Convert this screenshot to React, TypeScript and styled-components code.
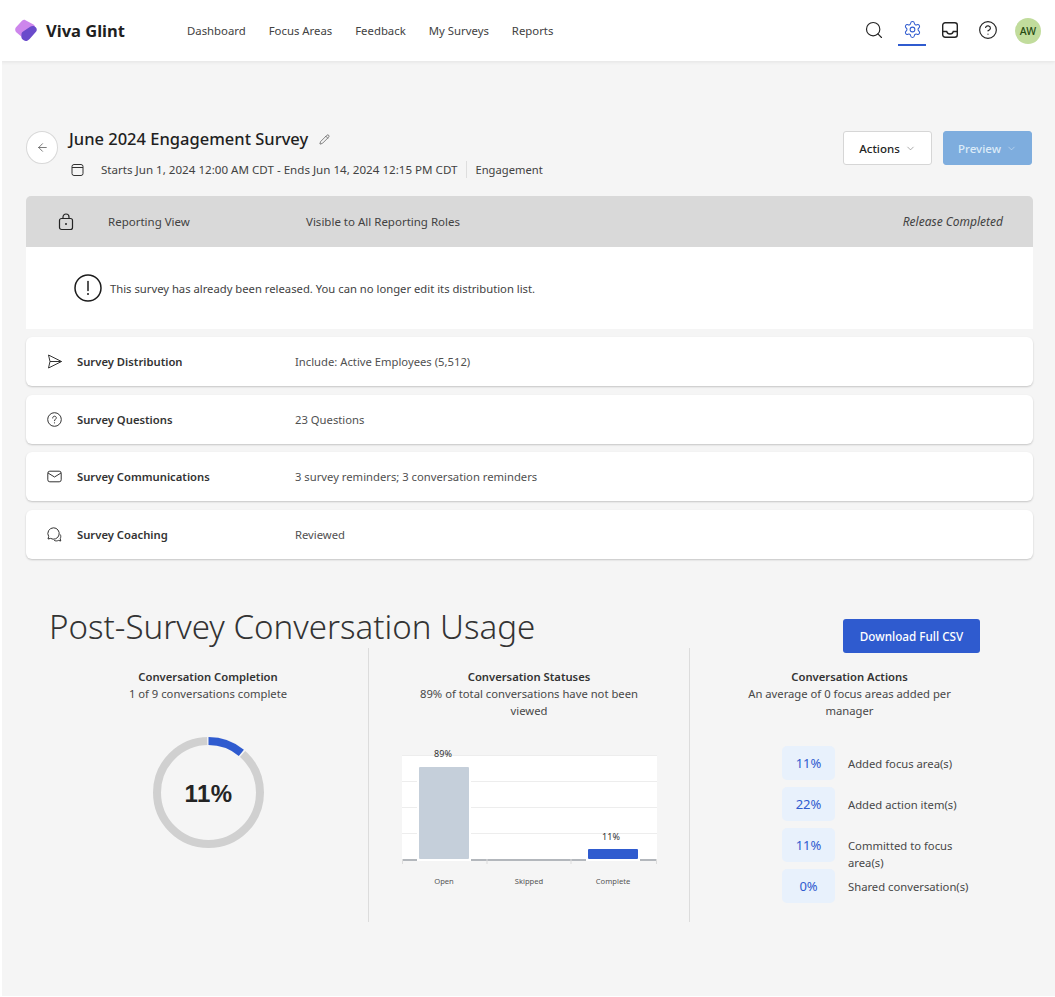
import styled, { createGlobalStyle } from "styled-components";
import { ArrowLeft, ChevronDown, CircleHelp, Pencil, Search, Settings } from "lucide-react";

const GlobalStyle = createGlobalStyle`
  html, body {
    margin: 0;
    padding: 0;
    background: #ffffff;
  }
  body {
    font-family: "Noto Sans", "Open Sans", sans-serif;
    color: #242424;
  }
  * {
    box-sizing: border-box;
  }
`;

const Logo = () => (
  <svg width="23" height="23" viewBox="0 0 23 23">
    <path d="M.8 8.500 7 1.800c1-1 2.400-1.200 3.500-.6l8 4.300c1.500.8 1.800 2.600.6 3.900l-8.600 8.400c-1 1-2.500 1-3.600.3L1.500 13.500C0 12.500-.2 9.800.8 8.500z" fill="#cd86ec" />
    <path d="M6.500 14.800c.2-1.300 1-2 2-2.600l6.300-4.300c1.500-1 3.300-1.300 4.900-.5 2 1 2.800 3.300 1.500 5l-6.600 7.500c-1.500 1.600-3.500 2.600-5.400 1.700-1.700-.8-2.900-2-2.800-3.800z" fill="#6a4bcb" />
  </svg>
);

const InboxIcon = () => (
  <svg width="18" height="18" viewBox="0 0 18 18" fill="none" stroke="#242424" strokeWidth="1.400">
    <rect x="1.700" y="1.700" width="14.600" height="14.600" rx="2.500" />
    <path d="M1.700 10.500h4c.5 2 1.500 2.500 3.300 2.500s2.800-.5 3.300-2.500h4" />
  </svg>
);

const CalendarIcon = () => (
  <svg width="13" height="14" viewBox="0 0 13 14" fill="none" stroke="#333" strokeWidth="1">
    <rect x="1" y="1.500" width="11" height="11" rx="2" />
    <path d="M1 4.500h11" />
  </svg>
);

const LockIcon = () => (
  <svg width="16" height="18" viewBox="0 0 16 18" fill="none" stroke="#242424" strokeWidth="1.200">
    <rect x="1.500" y="5.500" width="13" height="11" rx="2" />
    <path d="M5 5.500V4a3 3 0 0 1 6 0v1.500" />
    <circle cx="8" cy="11" r="1" fill="#242424" stroke="none" />
  </svg>
);

const AlertIcon = () => (
  <svg width="28" height="28" viewBox="0 0 28 28" fill="none" stroke="#1c1c1c" strokeWidth="1.500">
    <circle cx="14" cy="14" r="13" />
    <path d="M14 7.500v9" strokeLinecap="round" />
    <circle cx="14" cy="20" r="1" fill="#1c1c1c" stroke="none" />
  </svg>
);

const SendIcon = () => (
  <svg width="15" height="15" viewBox="0 0 15 15" fill="none" stroke="#333" strokeWidth="1">
    <path d="M1.500 1 14.500 7.500 1.500 14 3 7.500z" strokeLinejoin="round" />
    <path d="M3 7.500h11.500" />
  </svg>
);

const QuestionIcon = () => (
  <svg width="15" height="15" viewBox="0 0 15 15" fill="none" stroke="#333" strokeWidth="1">
    <circle cx="7.500" cy="7.500" r="6.800" />
    <path d="M5.700 6c0-1.100.8-1.800 1.800-1.800s1.800.7 1.800 1.600c0 1.400-1.800 1.400-1.800 2.900" strokeLinecap="round" />
    <circle cx="7.500" cy="10.800" r=".6" fill="#333" stroke="none" />
  </svg>
);

const MailIcon = () => (
  <svg width="15" height="15" viewBox="0 0 15 15" fill="none" stroke="#333" strokeWidth="1">
    <rect x=".8" y="2.200" width="13.400" height="10.600" rx="2" />
    <path d="M1 4 7.500 8 14 4" />
  </svg>
);

const ChatIcon = () => (
  <svg width="15" height="15" viewBox="0 0 15 15" fill="none" stroke="#333" strokeWidth="1">
    <path d="M6.500 .8a5.700 5.700 0 0 0-4.800 8.700L1 12l2.600-.6A5.700 5.700 0 1 0 6.500 .8z" />
    <path d="M13.300 7.500c.7 1.300.6 2.900-.1 4.200l.6 2.300-2.400-.6c-1.300.7-2.900.7-4.200 0" />
  </svg>
);

const Donut = ({ percent }: { percent: number }) => {
  const radius = 51.500;
  const circumference = 2 * Math.PI * radius;
  const filled = (circumference * percent) / 100;
  return (
    <DonutWrap>
      <svg width="111" height="111" viewBox="0 0 111 111" fill="none">
        <circle cx="55.500" cy="55.500" r={radius} stroke="#d0d0d0" strokeWidth="8" />
        <circle
          cx="55.500"
          cy="55.500"
          r={radius}
          stroke="#f5f5f5"
          strokeWidth="9"
          strokeDasharray={`${filled + 3} ${circumference}`}
          transform="rotate(-91.500 55.500 55.500)"
        />
        <circle
          cx="55.500"
          cy="55.500"
          r={radius}
          stroke="#2f5bcf"
          strokeWidth="8"
          strokeDasharray={`${filled} ${circumference}`}
          transform="rotate(-90 55.500 55.500)"
        />
      </svg>
      <DonutLabel>{percent}%</DonutLabel>
    </DonutWrap>
  );
};

const BarChart = () => (
  <svg width="255" height="146" viewBox="0 -6 255 146" fontFamily="Noto Sans, sans-serif">
    <rect x="0" y="6" width="255" height="105" fill="#ffffff" />
    {[6, 32, 58, 84].map((y) => (
      <rect key={y} x="0" y={y} width="255" height="1" fill="#ededed" />
    ))}
    <rect x="0" y="110" width="255" height="2" fill="#b3b7bc" />
    {[0, 84.500, 168.500, 254].map((x) => (
      <rect key={x} x={x} y="110" width="1" height="5" fill="#dcdcdc" />
    ))}
    <rect x="15" y="15" width="54" height="97" fill="#ffffff" />
    <rect x="17" y="18" width="50" height="92" rx="1" fill="#c5cfda" />
    <rect x="184" y="97" width="54" height="15" fill="#ffffff" />
    <rect x="186" y="100" width="50" height="10" rx="1" fill="#2f5bcf" />
    <text x="41" y="7.500" fontSize="9" fill="#333" textAnchor="middle">89%</text>
    <text x="209" y="90.500" fontSize="9" fill="#333" textAnchor="middle">11%</text>
    <text x="42" y="135" fontSize="7.600" fill="#555" textAnchor="middle">Open</text>
    <text x="127" y="135" fontSize="7.600" fill="#555" textAnchor="middle">Skipped</text>
    <text x="211" y="135" fontSize="7.600" fill="#555" textAnchor="middle">Complete</text>
  </svg>
);

const rows = [
  { icon: <SendIcon />, label: "Survey Distribution", value: "Include: Active Employees (5,512)" },
  { icon: <QuestionIcon />, label: "Survey Questions", value: "23 Questions" },
  { icon: <MailIcon />, label: "Survey Communications", value: "3 survey reminders; 3 conversation reminders" },
  { icon: <ChatIcon />, label: "Survey Coaching", value: "Reviewed" },
];

const actions = [
  { value: "11%", label: "Added focus area(s)" },
  { value: "22%", label: "Added action item(s)" },
  { value: "11%", label: "Committed to focus area(s)" },
  { value: "0%", label: "Shared conversation(s)" },
];

const navItems = ["Dashboard", "Focus Areas", "Feedback", "My Surveys", "Reports"];

const App = () => {
  return (
    <>
      <GlobalStyle />
      <Page>
        <Header>
          <Brand>
            <Logo />
            <BrandName>Viva Glint</BrandName>
          </Brand>
          <Nav>
            {navItems.map((item) => (
              <NavLink key={item}>{item}</NavLink>
            ))}
          </Nav>
          <HeaderIcons>
            <IconButton>
              <Search size={20} strokeWidth={1.400} color="#242424" />
            </IconButton>
            <IconButton $active>
              <Settings size={19} strokeWidth={1.300} color="#2f5bcf" />
            </IconButton>
            <IconButton>
              <InboxIcon />
            </IconButton>
            <IconButton>
              <CircleHelp size={20} strokeWidth={1.400} color="#242424" />
            </IconButton>
            <Avatar>AW</Avatar>
          </HeaderIcons>
        </Header>

        <Content>
          <TitleRow>
            <BackButton>
              <ArrowLeft size={13} strokeWidth={1.300} color="#444" />
            </BackButton>
            <TitleBlock>
              <TitleLine>
                <Title>June 2024 Engagement Survey</Title>
                <Pencil size={11} strokeWidth={1.300} color="#333" />
              </TitleLine>
              <MetaLine>
                <CalendarIcon />
                <MetaText>Starts Jun 1, 2024 12:00 AM CDT - Ends Jun 14, 2024 12:15 PM CDT</MetaText>
                <MetaType>Engagement</MetaType>
              </MetaLine>
            </TitleBlock>
            <TitleActions>
              <ActionButton>
                Actions
                <ChevronDown size={11} strokeWidth={1.200} color="#666" />
              </ActionButton>
              <ActionButton $primary>
                Preview
                <ChevronDown size={11} strokeWidth={1.200} color="#dcebf8" />
              </ActionButton>
            </TitleActions>
          </TitleRow>

          <StatusBar>
            <StatusIcon>
              <LockIcon />
            </StatusIcon>
            <StatusLabel>Reporting View</StatusLabel>
            <StatusValue>Visible to All Reporting Roles</StatusValue>
            <StatusState>Release Completed</StatusState>
          </StatusBar>
          <Notice>
            <AlertIcon />
            <span>This survey has already been released. You can no longer edit its distribution list.</span>
          </Notice>

          <RowList>
            {rows.map((row) => (
              <Row key={row.label}>
                <RowIcon>{row.icon}</RowIcon>
                <RowLabel>{row.label}</RowLabel>
                <RowValue>{row.value}</RowValue>
              </Row>
            ))}
          </RowList>

          <UsageHeader>
            <UsageTitle>Post-Survey Conversation Usage</UsageTitle>
            <DownloadButton>Download Full CSV</DownloadButton>
          </UsageHeader>

          <Columns>
            <Column>
              <ColumnTitle>Conversation Completion</ColumnTitle>
              <ColumnText>1 of 9 conversations complete</ColumnText>
              <Donut percent={11} />
            </Column>
            <Column>
              <ColumnTitle>Conversation Statuses</ColumnTitle>
              <ColumnText>89% of total conversations have not been viewed</ColumnText>
              <ChartWrap>
                <BarChart />
              </ChartWrap>
            </Column>
            <Column>
              <ColumnTitle>Conversation Actions</ColumnTitle>
              <ColumnText>An average of 0 focus areas added per manager</ColumnText>
              <ActionList>
                {actions.map((action) => (
                  <ActionRow key={action.label}>
                    <Chip>{action.value}</Chip>
                    <ActionLabel>{action.label}</ActionLabel>
                  </ActionRow>
                ))}
              </ActionList>
            </Column>
          </Columns>
        </Content>
      </Page>
    </>
  );
};

const Page = styled.div`
  margin-left: 2px;
  height: 996px;
  background: #f5f5f5;
  overflow: hidden;
`;

const Header = styled.header`
  display: flex;
  align-items: center;
  height: 61px;
  margin-left: -2px;
  padding: 0 14px 0 15px;
  background: #ffffff;
  box-shadow: 0 1px 4px rgba(0, 0, 0, 0.08);
`;

const Brand = styled.div`
  display: flex;
  align-items: center;
  gap: 8px;
  width: 172px;
`;

const BrandName = styled.span`
  font-size: 16.500px;
  font-weight: 700;
  color: #1f1f1f;
`;

const Nav = styled.nav`
  display: flex;
  gap: 23px;
`;

const NavLink = styled.a`
  font-size: 11.350px;
  color: #424242;
`;

const HeaderIcons = styled.div`
  display: flex;
  align-items: center;
  gap: 10px;
  margin-left: auto;
`;

const IconButton = styled.div<{ $active?: boolean }>`
  display: flex;
  align-items: center;
  justify-content: center;
  width: 28px;
  height: 30px;
  border-bottom: 2px solid ${({ $active }) => ($active ? "#2f5bcf" : "transparent")};
`;

const Avatar = styled.div`
  display: flex;
  align-items: center;
  justify-content: center;
  width: 26px;
  height: 26px;
  margin-left: 3px;
  border-radius: 50%;
  background: #c1dc9c;
  color: #274a12;
  font-size: 10.500px;
  font-weight: 500;
`;

const Content = styled.main`
  padding: 70px 22px 0 24px;
`;

const TitleRow = styled.section`
  display: flex;
  gap: 11px;
`;

const BackButton = styled.div`
  display: flex;
  align-items: center;
  justify-content: center;
  flex: none;
  width: 32px;
  height: 33px;
  border: 1px solid #d8d8d8;
  border-radius: 50%;
  background: #ffffff;
`;

const TitleBlock = styled.div`
  display: flex;
  flex-direction: column;
  gap: 10px;
  margin-top: -4px;
`;

const TitleLine = styled.div`
  display: flex;
  align-items: center;
  gap: 11px;
`;

const Title = styled.h1`
  margin: 0;
  font-size: 16.500px;
  font-weight: 500;
  line-height: 24px;
  color: #1f1f1f;
`;

const MetaLine = styled.div`
  display: flex;
  align-items: center;
  padding-left: 2px;
  font-size: 11.600px;
  color: #424242;
`;

const MetaText = styled.span`
  margin-left: 17px;
  padding-right: 9px;
  border-right: 1px solid #dedede;
  line-height: 17px;
`;

const MetaType = styled.span`
  margin-left: 8px;
  font-size: 11.200px;
`;

const TitleActions = styled.div`
  display: flex;
  gap: 11px;
  margin: 0 1px 0 auto;
`;

const ActionButton = styled.div<{ $primary?: boolean }>`
  display: flex;
  align-items: center;
  justify-content: center;
  gap: 5px;
  width: 89px;
  height: 34px;
  border: 1px solid ${({ $primary }) => ($primary ? "#7eadde" : "#d6d6d6")};
  border-radius: 3px;
  background: ${({ $primary }) => ($primary ? "#7eadde" : "#ffffff")};
  color: ${({ $primary }) => ($primary ? "#dcebf8" : "#242424")};
  font-size: 11.500px;
  font-weight: 500;
`;

const StatusBar = styled.section`
  display: flex;
  align-items: center;
  height: 51px;
  margin-top: 18px;
  padding: 0 30px 0 32px;
  border-radius: 5px 5px 0 0;
  background: #d9d9d9;
  font-size: 11.500px;
  color: #424242;
`;

const StatusIcon = styled.span`
  display: flex;
  width: 50px;
`;

const StatusLabel = styled.span`
  width: 198px;
`;

const StatusValue = styled.span``;

const StatusState = styled.span`
  margin-left: auto;
  font-size: 12px;
  font-style: italic;
`;

const Notice = styled.section`
  display: flex;
  align-items: center;
  gap: 8px;
  height: 82px;
  padding-left: 48px;
  background: #ffffff;
  font-size: 11.250px;
  color: #424242;
`;

const RowList = styled.section`
  display: flex;
  flex-direction: column;
  gap: 8.670px;
  margin-top: 8px;
`;

const Row = styled.div`
  display: flex;
  align-items: center;
  height: 49px;
  padding-left: 21px;
  border-radius: 6px;
  background: #ffffff;
  box-shadow: 0 1px 2px rgba(0, 0, 0, 0.2);
  font-size: 11.250px;
`;

const RowIcon = styled.span`
  display: flex;
  width: 30px;
`;

const RowLabel = styled.span`
  width: 218px;
  font-weight: 600;
  color: #333333;
`;

const RowValue = styled.span`
  color: #505050;
`;

const UsageHeader = styled.section`
  display: flex;
  align-items: flex-start;
  justify-content: space-between;
  margin-top: 41px;
  padding: 0 53px 0 23px;
`;

const UsageTitle = styled.h2`
  margin: 0;
  font-size: 33.100px;
  font-weight: 300;
  line-height: 54px;
  color: #333333;
`;

const DownloadButton = styled.div`
  display: flex;
  align-items: center;
  justify-content: center;
  width: 137px;
  height: 34px;
  margin-top: 19px;
  border-radius: 3px;
  background: #2f5bcf;
  color: #ffffff;
  font-size: 11.700px;
  font-weight: 500;
`;

const Columns = styled.section`
  display: grid;
  grid-template-columns: 320px 321px 320px;
  margin: -6px 0 0 22px;
`;

const Column = styled.div`
  display: flex;
  flex-direction: column;
  align-items: center;
  height: 274px;
  padding: 20px 40px 0;
  text-align: center;
  font-size: 11.250px;
  line-height: 17px;
  color: #484848;

  & + & {
    border-left: 1px solid #dcdcdc;
  }
`;

const ColumnTitle = styled.div`
  font-weight: 600;
  color: #333333;
`;

const ColumnText = styled.div``;

const DonutWrap = styled.div`
  position: relative;
  width: 111px;
  height: 111px;
  margin-top: 35px;
`;

const DonutLabel = styled.div`
  position: absolute;
  inset: 0;
  display: flex;
  align-items: center;
  justify-content: center;
  padding: 3px 0 0 1px;
  font-family: "Liberation Sans", sans-serif;
  font-size: 24px;
  font-weight: 700;
  letter-spacing: 0.500px;
  color: #242424;
`;

const ChartWrap = styled.div`
  display: flex;
  margin-top: 24px;
`;

const ActionList = styled.div`
  display: flex;
  flex-direction: column;
  align-self: stretch;
  gap: 7px;
  margin-top: 27px;
  padding-left: 52px;
`;

const ActionRow = styled.div`
  display: flex;
  gap: 13px;
  text-align: left;
`;

const Chip = styled.div`
  display: flex;
  align-items: center;
  justify-content: center;
  flex: none;
  width: 53px;
  height: 34px;
  padding-top: 2px;
  border-radius: 5px;
  background: #e8f1fc;
  color: #2f5bcf;
  font-size: 13px;
`;

const ActionLabel = styled.div`
  width: 125px;
  height: 25px;
  margin-top: 9px;
`;

export default App;
